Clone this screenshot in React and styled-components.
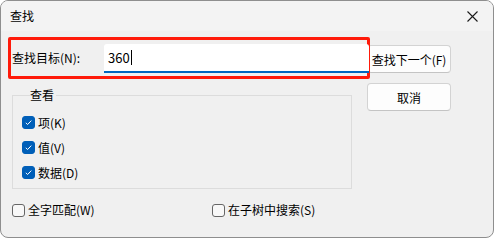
import React from "react";
import styled, { createGlobalStyle } from "styled-components";

const Global = createGlobalStyle`
  html, body { margin: 0; padding: 0; background: #ffffff; }
  body { font-family: "Noto Sans CJK SC", "Noto Sans", sans-serif; }
  * { box-sizing: border-box; }
`;

const Window = styled.div`
  width: 494px;
  height: 238px;
  border: 1px solid #8e8e8e;
  border-radius: 8px;
  overflow: hidden;
  background: #f0f0f0;
  display: flex;
  flex-direction: column;
  font-size: 12px;
  color: #000;
`;

const TitleBar = styled.div`
  height: 30px;
  flex: none;
  background: #f3f3f3;
  display: flex;
  align-items: center;
  justify-content: space-between;
  padding: 0 10px 0 9px;
`;

const Title = styled.span`
  font-size: 12px;
  line-height: 16px;
`;

const CloseIcon = () => (
  <svg width="11" height="11" viewBox="0 0 11 11" style={{ marginRight: 5 }}>
    <path d="M0.5 0.5 L10.5 10.5 M10.5 0.5 L0.5 10.5" stroke="#1a1a1a" strokeWidth="1.1" fill="none" />
  </svg>
);

const Body = styled.div`
  flex: 1;
  display: flex;
  flex-direction: column;
  padding: 6px 0 0 7px;
`;

const TopRow = styled.div`
  display: flex;
  align-items: flex-start;
`;

const LeftCol = styled.div`
  display: flex;
  flex-direction: column;
`;

const Highlight = styled.div`
  position: relative;
  z-index: 1;
  width: 362px;
  height: 42px;
  border: 3px solid #ff1a0a;
  border-radius: 2px;
  display: flex;
  align-items: flex-start;
  padding: 4px 0 0 1px;
`;

const Label = styled.label`
  width: 92px;
  flex: none;
  line-height: 16px;
  margin-top: 6px;
  white-space: nowrap;
`;

const Input = styled.div`
  flex: 1;
  height: 29px;
  background: #ffffff;
  border-bottom: 2px solid #0067c0;
  border-radius: 3px 3px 0 0;
  display: flex;
  align-items: center;
  padding-left: 4px;
  font-size: 13px;
  margin-right: -2px;
`;

const Caret = styled.span`
  display: inline-block;
  width: 1px;
  height: 15px;
  background: #000;
  margin-left: 1px;
`;

const ButtonCol = styled.div`
  display: flex;
  flex-direction: column;
  gap: 10px;
  margin-left: -3px;
  padding-top: 8px;
`;

const Button = styled.button`
  width: 84px;
  height: 28px;
  background: #fdfdfd;
  border: 1px solid #d3d3d3;
  border-bottom-color: #c4c4c4;
  border-radius: 4px;
  font-family: inherit;
  font-size: 12px;
  color: #000;
  padding: 0;
  white-space: nowrap;
  display: flex;
  align-items: center;
  justify-content: center;
`;

const Group = styled.fieldset`
  margin: 8px 0 0 4px;
  width: 340px;
  border: 1px solid #dcdcdc;
  border-radius: 0;
  padding: 7px 0 3px 9px;
  display: flex;
  flex-direction: column;
`;

const Legend = styled.legend`
  padding: 0 2px 0 0;
  margin-left: 8px;
  line-height: 16px;
  font-size: 12px;
`;

const CheckRow = styled.label`
  height: 25px;
  display: flex;
  align-items: center;
  gap: 3px;
  line-height: 16px;
  white-space: nowrap;
`;

const Box = styled.span`
  width: 13px;
  height: 13px;
  flex: none;
  border-radius: 3px;
  display: inline-flex;
  align-items: center;
  justify-content: center;
  background: ${p => (p.$checked ? "#005fb8" : "#f8f8f8")};
  border: 1px solid ${p => (p.$checked ? "#005fb8" : "#666666")};
`;

const Check = ({ checked }) => (
  <Box $checked={checked}>
    {checked && (
      <svg width="9" height="9" viewBox="0 0 9 9">
        <path d="M1.8 4.8 L3.6 6.5 L7.3 2.6" stroke="#ffffff" strokeWidth="1" fill="none" />
      </svg>
    )}
  </Box>
);

const BottomRow = styled.div`
  display: flex;
  margin: 13px 0 0 4px;
`;

const BottomItem = styled(CheckRow)`
  height: 16px;
  width: ${p => p.$w}px;
`;

export default function App() {
  return (
    <>
      <Global />
      <Window>
        <TitleBar>
          <Title>查找</Title>
          <CloseIcon />
        </TitleBar>
        <Body>
          <TopRow>
            <LeftCol>
              <Highlight>
                <Label>查找目标(N):</Label>
                <Input>
                  360
                  <Caret />
                </Input>
              </Highlight>
              <Group>
                <Legend>查看</Legend>
                <CheckRow><Check checked />项(K)</CheckRow>
                <CheckRow><Check checked />值(V)</CheckRow>
                <CheckRow><Check checked />数据(D)</CheckRow>
              </Group>
            </LeftCol>
            <ButtonCol>
              <Button>查找下一个(F)</Button>
              <Button>取消</Button>
            </ButtonCol>
          </TopRow>
          <BottomRow>
            <BottomItem $w={200}><Check />全字匹配(W)</BottomItem>
            <BottomItem $w={200}><Check />在子树中搜索(S)</BottomItem>
          </BottomRow>
        </Body>
      </Window>
    </>
  );
}
